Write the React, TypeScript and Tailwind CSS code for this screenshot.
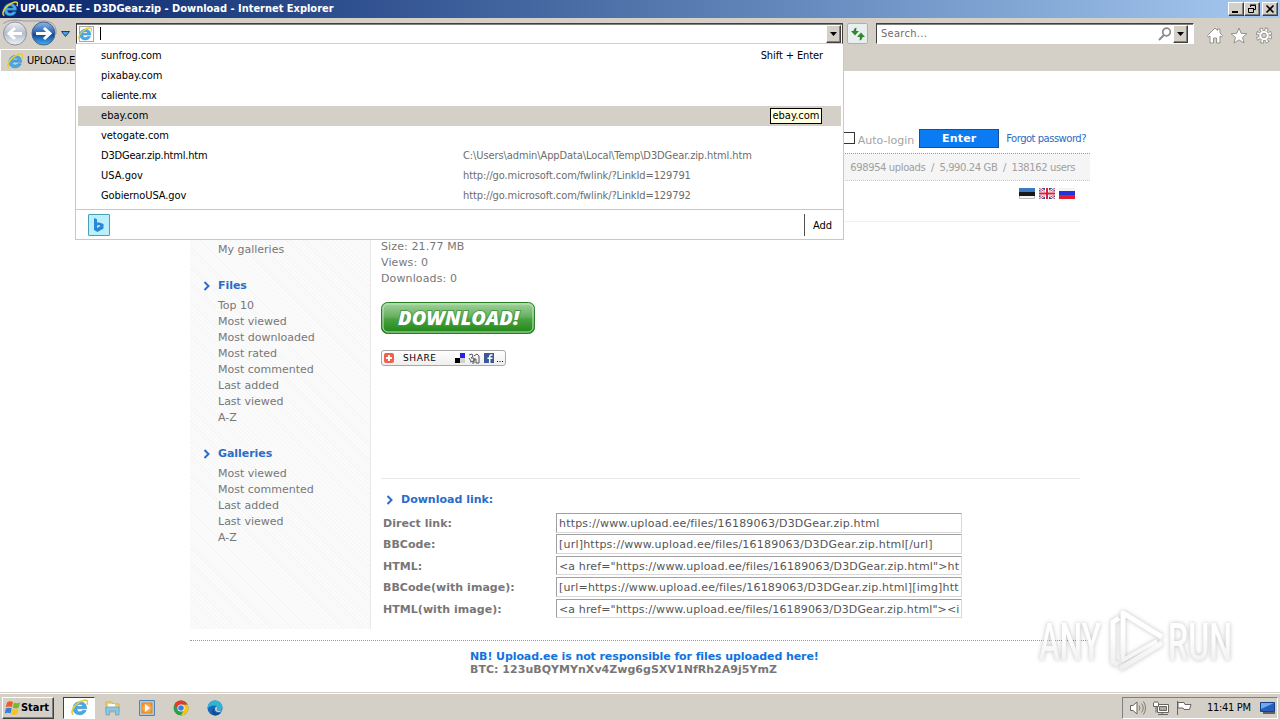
import type { ReactNode } from 'react';

const suggestions = [
  { name: 'sunfrog.com', tracking: 'tracking-[-0.1px]' },
  { name: 'pixabay.com', tracking: 'tracking-[-0.05px]' },
  { name: 'caliente.mx', tracking: 'tracking-[-0.2px]' },
  { name: 'ebay.com', tracking: 'tracking-[0.05px]', active: true },
  { name: 'vetogate.com', tracking: 'tracking-[-0.05px]' },
  {
    name: 'D3DGear.zip.html.htm',
    tracking: 'tracking-[-0.2px]',
    url: 'C:\\Users\\admin\\AppData\\Local\\Temp\\D3DGear.zip.html.htm',
  },
  {
    name: 'USA.gov',
    tracking: 'tracking-[0.05px]',
    url: 'http://go.microsoft.com/fwlink/?LinkId=129791',
  },
  {
    name: 'GobiernoUSA.gov',
    tracking: 'tracking-[-0.1px]',
    url: 'http://go.microsoft.com/fwlink/?LinkId=129792',
  },
];

const fileLinks = [
  'Top 10',
  'Most viewed',
  'Most downloaded',
  'Most rated',
  'Most commented',
  'Last added',
  'Last viewed',
  'A-Z',
];

const galleryLinks = [
  'Most viewed',
  'Most commented',
  'Last added',
  'Last viewed',
  'A-Z',
];

const fileUrl = 'https://www.upload.ee/files/16189063/D3DGear.zip.html';

const downloadLinks = [
  { label: 'Direct link:', value: fileUrl, tracking: 'tracking-[0.19px]' },
  {
    label: 'BBCode:',
    value: `[url]${fileUrl}[/url]`,
    tracking: 'tracking-[0.21px]',
  },
  {
    label: 'HTML:',
    value: `<a href="${fileUrl}">ht`,
    tracking: 'tracking-[0.13px]',
  },
  {
    label: 'BBCode(with image):',
    value: `[url=${fileUrl}][img]htt`,
    tracking: 'tracking-[0.18px]',
  },
  {
    label: 'HTML(with image):',
    value: `<a href="${fileUrl}"><i`,
    tracking: 'tracking-[0.12px]',
  },
];

function IeIcon({ className }: { className: string }) {
  return (
    <svg viewBox="0 0 16 16" className={className}>
      <path
        d="M14.6 9.2H5.4c.1 1.9 1.3 2.9 2.9 2.9 1.1 0 2-.5 2.4-1.3h3.5c-.9 2.5-3.1 4-6 4C4.500 14.800 2 12.300 2 8.700 2 5.100 4.700 2.500 8.300 2.500c3.900 0 6.500 2.700 6.300 6.700zM11.100 7c-.2-1.200-1.200-2-2.700-2-1.500 0-2.600.8-2.900 2z"
        fill="#45abe8"
        stroke="#2a7cc0"
        strokeWidth=".5"
      />
      <path
        d="M2.300 14.600C-.4 13.200 1.300 8 5.800 4.500 9.300 1.700 13.800.1 15.200 1.600c.7.8.4 2.200-.3 3.600"
        fill="none"
        stroke="#e4cc3a"
        strokeWidth="1.600"
      />
    </svg>
  );
}

function Arrow({ className }: { className?: string }) {
  return (
    <svg viewBox="0 0 8 10" className={`h-[10px] w-2 shrink-0 ${className}`}>
      <path d="M1.500 1l4 4-4 4" fill="none" stroke="#2a6cc8" strokeWidth="2" />
    </svg>
  );
}

function WinButton({
  className,
  children,
}: {
  className: string;
  children: ReactNode;
}) {
  return (
    <div
      className={`flex items-center justify-center border border-t-white border-l-white border-r-[#404040] border-b-[#404040] bg-[#d4d0c8] shadow-[inset_-1px_-1px_#808080] ${className}`}
    >
      {children}
    </div>
  );
}

function DropArrow() {
  return (
    <svg viewBox="0 0 7 4" className="h-1 w-[7px]">
      <path d="M0 0h7L3.500 4z" fill="#000" />
    </svg>
  );
}

function TitleBar() {
  return (
    <div className="flex h-[18px] items-center bg-linear-to-r from-[#0a246a] to-[#a6caf0] pr-[2px] pl-[2px]">
      <IeIcon className="h-4 w-4" />
      <span className="mt-px ml-[2px] font-['DejaVu_Sans_Condensed','DejaVu_Sans',sans-serif] text-[11px] font-bold tracking-[-0.02px] whitespace-nowrap text-white">
        UPLOAD.EE - D3DGear.zip - Download - Internet Explorer
      </span>
      <div className="ml-auto flex">
        <WinButton className="h-[14px] w-4">
          <svg viewBox="0 0 12 10" className="h-[10px] w-3">
            <path d="M2 7h6v2H2z" />
          </svg>
        </WinButton>
        <WinButton className="h-[14px] w-4">
          <svg viewBox="0 0 12 10" className="h-[10px] w-3">
            <path
              d="M4.500 3V1.500h5v4H8M2.500 4.500h5v4h-5zM4 1h6M2 4.500h6"
              fill="none"
              stroke="#000"
            />
          </svg>
        </WinButton>
        <WinButton className="ml-[2px] h-[14px] w-4">
          <svg viewBox="0 0 12 10" className="h-[10px] w-3">
            <path d="M2.500 1.500l7 7M9.500 1.500l-7 7" stroke="#000" strokeWidth="1.600" />
          </svg>
        </WinButton>
      </div>
    </div>
  );
}

function NavButtons() {
  return (
    <svg viewBox="0 0 74 30" className="h-[30px] w-[74px] shrink-0">
      <defs>
        <linearGradient id="back" x2="0" y2="1">
          <stop offset="0" stopColor="#eef1f5" />
          <stop offset=".5" stopColor="#b4bdca" />
          <stop offset="1" stopColor="#edf2f6" />
        </linearGradient>
        <linearGradient id="forward" x2="0" y2="1">
          <stop offset="0" stopColor="#8fb8e6" />
          <stop offset=".45" stopColor="#2868ba" />
          <stop offset=".55" stopColor="#0f489c" />
          <stop offset="1" stopColor="#42b5f2" />
        </linearGradient>
      </defs>
      <path
        d="M3 6C8 1 18 2 24 3h20c8 0 13 5 12 13"
        fill="none"
        stroke="#9b9b9b"
        strokeWidth="1"
      />
      <circle cx="15" cy="15.500" r="11.500" fill="url(#back)" stroke="#8e949d" />
      <circle cx="43.500" cy="15.500" r="11.500" fill="url(#forward)" stroke="#4a6387" />
      <path
        d="M22 15.500H10M15 10l-6 5.500 6 5.500"
        fill="none"
        stroke="#fff"
        strokeWidth="3"
      />
      <path
        d="M36 15.500h13M44 10l6 5.500-6 5.500"
        fill="none"
        stroke="#fff"
        strokeWidth="3"
      />
      <path d="M61.500 13.500h8l-4 5z" fill="#4a9fe0" stroke="#1c3e78" />
    </svg>
  );
}

function NavBar() {
  return (
    <div className="flex h-[31px] items-start">
      <NavButtons />
      <div className="mt-[5px] ml-[2px] flex h-[21px] w-[767px] items-center border border-t-[#404040] border-r-[#404040] border-b-[#d4d0c8] border-l-[#404040] bg-white pl-[2px] shadow-[inset_0_1px_#808080]">
        <div className="flex h-4 w-[15px] items-center border border-[#a8a8a8] bg-[#fbfbfb]">
          <IeIcon className="-ml-[2px] h-[14px] w-[14px]" />
        </div>
        <div className="ml-[6px] h-[13px] w-px bg-black" />
        <WinButton className="mr-px ml-auto h-[18px] w-[15px]">
          <DropArrow />
        </WinButton>
      </div>
      <div className="mt-[5px] ml-[4px] flex h-[21px] w-[21px] items-center justify-center rounded-[2px] border border-[#b2afa9] bg-[#e9eef0]">
        <svg viewBox="0 0 16 16" className="h-4 w-4">
          <path d="M6.500 1.500C4.500 2 3.500 3.500 3.500 5H1l4 4.500L9 5H6.200C6.200 4 6.200 2.500 6.500 1.500z" fill="#2d8a2b" />
          <path d="M9.500 14.500c2-.500 3-2 3-3.500H15l-4-4.500L7 11h2.800c0 1 0 2.500-.3 3.500z" fill="#2d8a2b" />
        </svg>
      </div>
      <div className="mt-[5px] ml-[8px] flex h-[21px] w-[318px] items-center border border-t-[#404040] border-r-white border-b-white border-l-[#404040] bg-white pr-[5px] pl-[4px] shadow-[inset_0_1px_#808080]">
        <span className="mt-[2px] font-['DejaVu_Sans_Condensed','DejaVu_Sans',sans-serif] text-[11px] tracking-[0.3px] text-[#6d6d6d]">
          Search...
        </span>
        <svg viewBox="0 0 14 14" className="ml-auto h-[14px] w-[14px]">
          <circle cx="8.500" cy="5" r="3.800" fill="none" stroke="#8a8a8a" strokeWidth="1.700" />
          <path d="M6 8l-5 5" stroke="#8a8a8a" strokeWidth="2" />
        </svg>
        <WinButton className="ml-[1px] h-[18px] w-[15px]">
          <DropArrow />
        </WinButton>
      </div>
      <svg viewBox="0 0 68 20" className="mt-[8px] ml-[12px] h-5 w-[68px]">
        <g fill="#fff" stroke="#96928d" strokeLinejoin="round">
          <path d="M1.500 9.500L9 2l2.500 2.500V3h2.500v4l2.500 2.500-1 1.500-1.500-1v7h-3.500v-5H7.500v5H4v-7l-1.500 1z" />
          <path d="M33 2l2.200 5.300 5.800.4-4.500 3.700 1.500 5.600-5-3.100-5 3.100 1.500-5.600L25 7.700l5.800-.4z" />
          <circle cx="58" cy="9.500" r="6.200" fill="none" strokeWidth="4" strokeDasharray="3.200 1.670" />
          <circle cx="58" cy="9.500" r="5.200" />
          <circle
            cx="58"
            cy="9.500"
            r="6"
            fill="none"
            stroke="#fff"
            strokeWidth="2.600"
            strokeDasharray="1.600 3.112"
            strokeDashoffset="-.8"
          />
          <circle cx="58" cy="9.500" r="2.300" fill="#d4d0c8" />
        </g>
      </svg>
    </div>
  );
}

function AddressDropdown() {
  return (
    <div className="absolute top-[44px] left-[75px] h-[196px] w-[769px] border border-t-0 border-[#c8c8c8] bg-white px-[2px] pt-[2px] font-['DejaVu_Sans_Condensed','DejaVu_Sans',sans-serif] text-[11px] text-black">
      {suggestions.map((item, index) => (
        <div
          key={item.name}
          className={`flex h-5 items-center pr-[18px] pl-[23px] ${
            item.active ? 'bg-[#d4d0c8]' : ''
          }`}
        >
          <span className={`w-[362px] ${item.tracking}`}>{item.name}</span>
          {item.url && (
            <span className="tracking-[-0.1px] whitespace-nowrap text-[#6d6d6d]">
              {item.url}
            </span>
          )}
          {index === 0 && (
            <span className="ml-auto tracking-[-0.1px]">Shift + Enter</span>
          )}
          {item.active && (
            <span className="mr-px ml-auto flex h-4 w-[52px] items-center justify-center border border-black bg-[#ffffe1]">
              ebay.com
            </span>
          )}
        </div>
      ))}
      <div className="-mx-[2px] mt-[3px] flex h-[30px] items-center border-t border-[#c8c8c8] pl-3">
        <div className="flex h-[22px] w-[22px] items-center justify-center rounded-[1px] border border-[#4a9fb4] bg-[#b9f0fb]">
          <svg viewBox="0 0 12 14" className="h-[14px] w-3">
            <path
              d="M1 0l3 1.200v3.500l1.500-.5L10.500 6v4.500L4.500 14 1 12zM4 7.500V10l3.500-2-1.500-1z"
              fill="#2a86d8"
              fillRule="evenodd"
            />
          </svg>
        </div>
        <div className="ml-auto flex h-[22px] w-[39px] items-center border-l border-[#505050] pt-[3px] pl-2">
          Add
        </div>
      </div>
    </div>
  );
}

function MenuSection({ title, links }: { title: string; links: string[] }) {
  return (
    <div className="mb-4">
      <div className="flex h-6 items-center">
        <Arrow className="mr-[7px]" />
        <h3 className="font-bold tracking-[-0.05px] text-[#2a6cc8]">{title}</h3>
      </div>
      <ul className="pl-[15px] leading-4">
        {links.map((link) => (
          <li key={link}>{link}</li>
        ))}
      </ul>
    </div>
  );
}

function Flags() {
  return (
    <div className="flex h-[41px] justify-end gap-1 border-b border-[#f0f0f0] pt-[7px] pr-[5px]">
      <svg viewBox="0 0 16 11" className="h-[11px] w-4">
        <path d="M0 0h16v4H0z" fill="#3d79c2" />
        <path d="M0 4h16v4H0z" fill="#17181c" />
        <path d="M0 8h16v3H0z" fill="#f4f4f4" />
        <path d="M.5 8v2.500h15V8" fill="none" stroke="#bbb" />
      </svg>
      <svg viewBox="0 0 16 11" className="h-[11px] w-4">
        <path d="M0 0h16v11H0z" fill="#3a4a9c" />
        <path d="M0 0l16 11M16 0L0 11" stroke="#fff" strokeWidth="2.600" />
        <path d="M0 0l16 11M16 0L0 11" stroke="#d8324a" />
        <path d="M8 0v11M0 5.500h16" stroke="#fff" strokeWidth="4" />
        <path d="M8 0v11M0 5.500h16" stroke="#d8203a" strokeWidth="2" />
      </svg>
      <svg viewBox="0 0 16 11" className="h-[11px] w-4">
        <path d="M0 0h16v4H0z" fill="#f4f4f4" />
        <path d="M0 3h16v4H0z" fill="#2432d8" />
        <path d="M0 7h16v4H0z" fill="#e01c30" />
      </svg>
    </div>
  );
}

function DownloadButton() {
  return (
    <svg viewBox="0 0 154 32" className="mt-[15px] h-8 w-[154px]">
      <defs>
        <linearGradient id="green" x2="0" y2="1">
          <stop offset="0" stopColor="#a4d4a0" />
          <stop offset=".45" stopColor="#66b060" />
          <stop offset=".55" stopColor="#48a040" />
          <stop offset="1" stopColor="#1d8514" />
        </linearGradient>
      </defs>
      <rect x=".5" y=".5" width="153" height="31" rx="6" fill="url(#green)" stroke="#2b7f27" />
      <rect x="2" y="2" width="150" height="28" rx="5" fill="none" stroke="#bfe3bb" />
      <text
        x="17"
        y="23"
        textLength="121"
        lengthAdjust="spacingAndGlyphs"
        fontFamily="Open Sans, sans-serif"
        fontWeight="800"
        fontStyle="italic"
        fontSize="20"
        fill="#fff"
        stroke="#4a9a44"
        strokeWidth="2"
        paintOrder="stroke"
      >
        DOWNLOAD!
      </text>
    </svg>
  );
}

function ShareButton() {
  return (
    <div className="mt-4 flex h-4 w-[125px] items-center rounded-[3px] border border-[#a8a8a8] bg-linear-to-b from-white to-[#eeeeee] pl-[2px]">
      <svg viewBox="0 0 10 10" className="h-[10px] w-[10px]">
        <rect width="10" height="10" rx="2" fill="#f0604c" />
        <path d="M5 2v6M2 5h6" stroke="#fff" strokeWidth="2" />
      </svg>
      <span className="mt-[2px] ml-[9px] w-[52px] font-['DejaVu_Sans',sans-serif] text-[9px] tracking-[0.6px] text-black">
        SHARE
      </span>
      <svg viewBox="0 0 48 12" className="h-3 w-12">
        <path d="M0 1h5v5H0z" fill="#fff" />
        <path d="M5 1h5v5H5z" fill="#2323e8" />
        <path d="M0 6h5v5H0z" />
        <path d="M5 6h5v5H5z" fill="#d0d0d0" />
        <path
          d="M14 3l3-1 1 2-2 2h3v3l-4 1M19 4l3-2 2 2v7h-3V7h-2v4h-2M14 6l2 3"
          fill="none"
          stroke="#555"
        />
        <path d="M29 1h10v10H29z" fill="#3b5998" />
        <path d="M37.500 3H36q-1.300 0-1.300 1.500V11M32.500 6.200h5" fill="none" stroke="#fff" strokeWidth="1.500" />
        <path d="M42 9h1v1h-1zM44.500 9h1v1h-1zM47 9h1v1h-1z" />
      </svg>
    </div>
  );
}

function Page() {
  return (
    <div className="mx-auto w-[900px] font-['DejaVu_Sans',sans-serif] text-[11px] text-[#777]">
      <div className="flex h-[83px] items-end justify-end border-b border-dotted border-[#999] pr-1 pb-[5px]">
        <div className="mb-[4px] h-3 w-3 border border-[#333] bg-white" />
        <span className="-mb-px ml-[3px] leading-4 text-[#a3a3a3]">Auto-login</span>
        <div className="ml-[5px] flex h-[19px] w-20 items-center justify-center border border-[#16509c] bg-[#0a7bf2] pt-px font-bold tracking-[0.2px] text-white">
          Enter
        </div>
        <span className="ml-[7px] text-[10px] leading-[19px] tracking-[-0.5px] text-[#2a6cc8]">
          Forgot password?
        </span>
      </div>
      <div className="flex h-[27px] items-center justify-end border-b border-dotted border-[#ccc] bg-[#f5f5f5] pt-px pr-[15px] text-[10px] tracking-[-0.4px] whitespace-pre text-[#a0a0a0]">
        698954 uploads  /  5,990.24 GB  /  138162 users
      </div>
      <div className="flex h-[448px]">
        <div className="w-[181px] border-r border-[#e8e8e8] bg-[repeating-linear-gradient(45deg,#f6f6f6_0px,#f6f6f6_1px,#fbfbfb_1px,#fbfbfb_3px)] pt-[61px] pl-[13px]">
          <div className="mb-4 pl-[15px] leading-4">My galleries</div>
          <MenuSection title="Files" links={fileLinks} />
          <MenuSection title="Galleries" links={galleryLinks} />
        </div>
        <div className="ml-[10px] w-[699px]">
          <Flags />
          <div className="pt-[17px] leading-4 tracking-[0.12px]">
            <div>Size: 21.77 MB</div>
            <div>Views: 0</div>
            <div>Downloads: 0</div>
          </div>
          <DownloadButton />
          <ShareButton />
          <div className="mt-[112px] flex h-[33px] items-center border-t border-[#eaeaea] pt-[10px] pl-[5px]">
            <Arrow className="mr-[7px]" />
            <h3 className="font-bold text-[#2a6cc8]">Download link:</h3>
          </div>
          <div className="pt-[2px]">
            {downloadLinks.map((link) => (
              <div key={link.label} className="flex h-[21.4px] items-start pl-[2px]">
                <span className="w-[173px] leading-[21px] font-bold tracking-[0.04px]">
                  {link.label}
                </span>
                <div
                  className={`h-[19.5px] w-[406px] border border-t-[#a0a0a0] border-r-[#d8d8d8] border-b-[#d8d8d8] border-l-[#a0a0a0] px-[2px] leading-[19px] whitespace-nowrap text-[#555] ${link.tracking}`}
                >
                  {link.value}
                </div>
              </div>
            ))}
          </div>
        </div>
      </div>
      <div className="mt-[11px] border-t border-dotted border-[#999] pt-[9px] pl-[280px] leading-[13px] font-bold">
        <div className="tracking-[-0.09px] text-[#1173e0]">
          NB! Upload.ee is not responsible for files uploaded here!
        </div>
        <div className="tracking-[0.03px]">
          BTC: 123uBQYMYnXv4Zwg6gSXV1NfRh2A9j5YmZ
        </div>
      </div>
    </div>
  );
}

function Watermark() {
  return (
    <svg
      viewBox="0 0 230 70"
      className="absolute top-[605px] left-[1030px] h-[70px] w-[230px] drop-shadow-[0_0_2px_rgba(0,0,0,0.25)]"
    >
      <defs>
        <linearGradient id="fade" x2="0" y1="5" y2="68" gradientUnits="userSpaceOnUse">
          <stop offset=".4" stopColor="#fff" />
          <stop offset="1" stopColor="#ececec" />
        </linearGradient>
      </defs>
      <g fill="url(#fade)" fontFamily="Roboto, sans-serif" fontWeight="500" fontSize="51">
        <text x="9" y="55" textLength="62" lengthAdjust="spacingAndGlyphs">
          ANY
        </text>
        <text x="138" y="55" textLength="64" lengthAdjust="spacingAndGlyphs">
          RUN
        </text>
      </g>
      <g fill="none" stroke="url(#fade)" strokeWidth="5" strokeLinejoin="round">
        <path d="M89 13l-6 4v40l5 3" />
        <path d="M93 50V8l39 24" />
        <path d="M93 18v37l34-19" strokeWidth="4" />
        <path d="M90 64l42-26" />
      </g>
    </svg>
  );
}

function Taskbar() {
  return (
    <div className="mt-auto flex h-[28px] items-center border-t border-[#d4d0c8] bg-[#d4d0c8] pr-[2px] pl-[2px] font-['DejaVu_Sans_Condensed','DejaVu_Sans',sans-serif] text-[11px] text-black shadow-[inset_0_1px_#fff]">
      <WinButton className="mt-[2px] h-[22px] w-[52px]">
        <svg viewBox="0 0 16 16" className="h-4 w-4 shrink-0">
          <path d="M2 2.500q3-2 6-.500L6.800 7.200q-3-1.500-6 .3z" fill="#ef5b28" />
          <path d="M9 2.500q3 1.500 6-.3l-1.300 5.500q-3 1.500-6-.2z" fill="#7ab929" />
          <path d="M.8 8.600q3-1.800 6-.2L5.500 13.500q-3-1.500-5.800.3z" fill="#2f82d8" />
          <path d="M7.600 8.900q3 1.500 6 .1l-1.300 5q-3 1.600-6-.1z" fill="#fbc11b" />
        </svg>
        <span className="mt-px mr-[2px] font-bold">Start</span>
      </WinButton>
      <div className="mt-[2px] ml-[9px] flex h-[22px] w-[32px] items-center justify-center border border-t-[#404040] border-r-white border-b-white border-l-[#404040] bg-white">
        <IeIcon className="h-[17px] w-[17px]" />
      </div>
      <svg viewBox="0 0 18 18" className="mt-[2px] ml-[9px] h-[18px] w-[18px]">
        <path d="M2 3h6l1 2h6v8H2z" fill="#f3d671" stroke="#c9a545" strokeWidth=".7" />
        <path d="M4 5h7v3H4z" fill="#fffbe6" />
        <path d="M2 8h13v8h-3.500v-4h-6v4H2z" fill="#8ec4e4" stroke="#5e9fc4" strokeWidth=".7" />
      </svg>
      <svg viewBox="0 0 16 16" className="mt-[2px] ml-[17px] h-4 w-4">
        <path d="M.5.500h15v15H.500z" fill="#a8c8e4" stroke="#4d86b8" />
        <path d="M2.500 2.500h11v11h-11z" fill="#f58a16" />
        <circle cx="8" cy="8" r="4.600" fill="#fff" fillOpacity=".25" />
        <path d="M6 4l5 4-5 4z" fill="#fff" />
      </svg>
      <svg viewBox="0 0 16 16" className="mt-[2px] ml-[18px] h-4 w-4">
        <circle cx="8" cy="8" r="7.500" fill="#2ea04b" />
        <path d="M8 4.500h6.630A7.500 7.500 0 0 1 8 15.500l3-5.700z" fill="#fbc116" />
        <path d="M1.500 4.250A7.500 7.500 0 0 1 14.500 4.500H8L5 9.800z" fill="#e33b2e" />
        <circle cx="8" cy="8" r="3.600" fill="#fff" />
        <circle cx="8" cy="8" r="2.800" fill="#3b7de8" />
      </svg>
      <svg viewBox="0 0 16 16" className="mt-[2px] ml-[18px] h-4 w-4">
        <circle cx="8" cy="8" r="7.500" fill="#1767b8" />
        <path d="M.5 8C.5 3.500 4 .5 8 .5c5 0 7.500 3.500 7.500 6.500 0 2.500-2 3.500-4 3.500-1.500 0-2-.5-1.500-1.500.8-1.800-.5-3.500-3-3.500C4 5.500 1.500 7 .5 9z" fill="#2fb4d8" />
        <path d="M6.500 8.500c-.5 3.500 3 5.500 7 4.500-1 1.500-3 2.500-5.500 2.500-3-1-4-4.500-1.500-7z" fill="#0f4a8c" />
        <path d="M9.800 9.200c.5-1 .2-2-.6-2.700-1.500 1-2 4.500 1.300 5.500 2 .5 3.500-.3 4.500-1.700-2 .8-5.800.8-5.200-1.100z" fill="#d4d0c8" />
      </svg>
      <div className="mt-[2px] ml-auto flex h-[22px] w-[156px] items-center border border-t-[#808080] border-r-white border-b-white border-l-[#808080] pl-[6px]">
        <svg viewBox="0 0 66 16" className="h-4 w-[66px] shrink-0">
          <g fill="#fff" stroke="#68655f">
            <path d="M1.500 5.500h2.500L8 2v12l-4-3.500H1.500z" />
            <path d="M10 5.500q2 2.500 0 5M12.500 3.500q3.500 4.500 0 9M14.500 1.500q4 6.500 0 13" fill="none" strokeWidth=".8" />
            <path d="M28.500 4.500h11v8h-11z" />
            <path d="M30.500 6.500h7v4h-7z" fill="#aaa" />
            <path d="M33 12.500v2h-4M33 14.500h6" fill="none" />
            <path d="M24.500 2.500v4h5v-4M26 1v2M28 1v2M27 6.500v6" />
            <path d="M48.500 1v14M49 2.500h6l1 2h6l-1.500 5H55l-1-1.500h-5z" />
          </g>
        </svg>
        <span className="mt-px ml-[12px] tracking-[-0.3px] whitespace-nowrap">11:41 PM</span>
        <svg viewBox="0 0 16 14" className="ml-[9px] h-[14px] w-4 shrink-0">
          <path d="M.5 1.500h14v9H.500z" fill="#2460c0" stroke="#164086" />
          <path d="M1 2h13L1 8z" fill="#72a8ec" />
          <path d="M3 12h12" stroke="#3c3c3c" strokeWidth="1.500" />
        </svg>
      </div>
    </div>
  );
}

export default function App() {
  return (
    <div className="relative flex h-[720px] w-[1280px] flex-col overflow-hidden bg-white">
      <TitleBar />
      <div className="h-[53px] bg-[#d4d0c8]">
        <NavBar />
        <div className="flex h-[22px] w-[180px] items-center border-t border-l border-white pl-[6px] font-['DejaVu_Sans_Condensed','DejaVu_Sans',sans-serif] text-[11px] text-black">
          <IeIcon className="h-4 w-4" />
          <span className="mt-px ml-1 tracking-[-0.2px]">UPLOAD.EE</span>
        </div>
      </div>
      <Page />
      <Taskbar />
      <AddressDropdown />
      <Watermark />
    </div>
  );
}
